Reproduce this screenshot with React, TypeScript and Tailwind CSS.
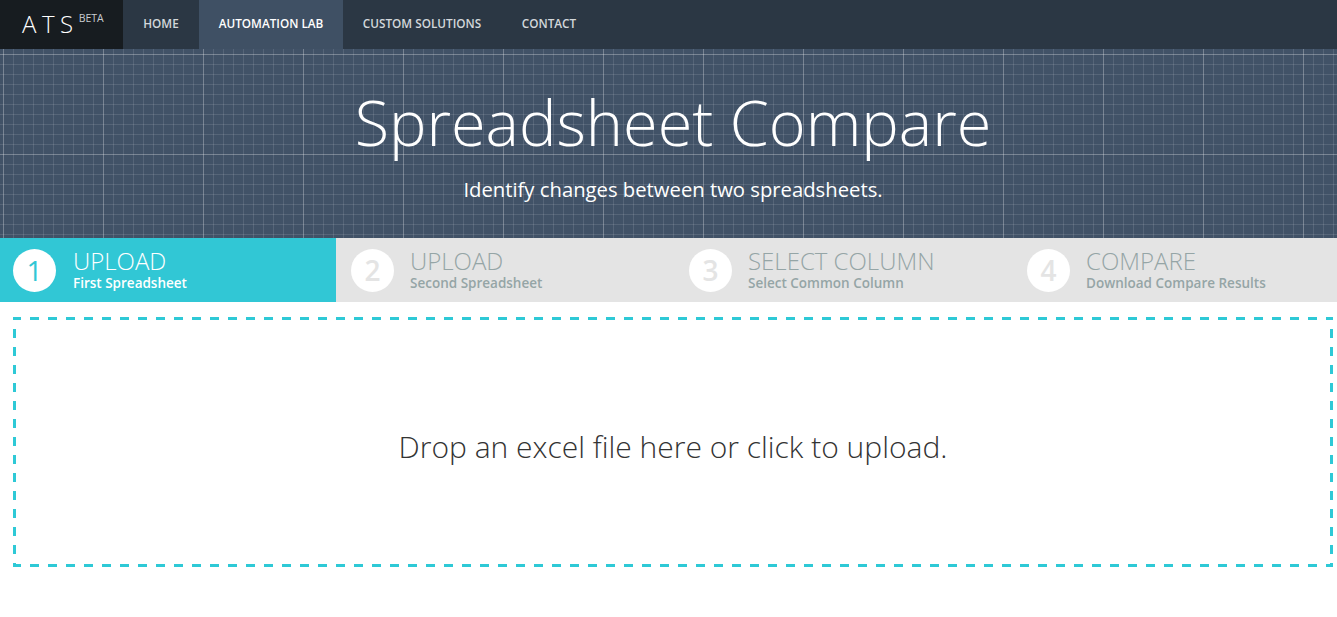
const navItems = [
  { label: "HOME", width: "w-[76px]", active: false },
  { label: "AUTOMATION LAB", width: "w-[144px]", active: true },
  { label: "CUSTOM SOLUTIONS", width: "w-[158px]", active: false },
  { label: "CONTACT", width: "w-[96px]", active: false },
]

const steps = [
  { n: 1, title: "UPLOAD", sub: "First Spreadsheet", active: true },
  { n: 2, title: "UPLOAD", sub: "Second Spreadsheet", active: false },
  { n: 3, title: "SELECT COLUMN", sub: "Select Common Column", active: false },
  { n: 4, title: "COMPARE", sub: "Download Compare Results", active: false },
]

export default function App() {
  return (
    <div className="h-[617px] w-full overflow-hidden bg-white font-['Open_Sans',sans-serif]">
      <nav className="flex h-[49px] bg-[#2b3744]">
        <div className="flex w-[123px] items-start bg-[#171c20] pl-[22px] text-white">
          <span className="mt-[8px] text-[24px] font-light leading-[32px] tracking-[0.23em]">ATS</span>
          <span className="mt-[11px] text-[10.5px] leading-[14px] text-[#c8cdd2]">BETA</span>
        </div>
        {navItems.map((item) => (
          <div
            key={item.label}
            className={
              item.active
                ? "flex items-center justify-center bg-[#3f5064] pb-[2px] text-[11.75px] font-semibold text-white " + item.width
                : "flex items-center justify-center pb-[2px] text-[11.75px] font-semibold text-[#d3d7db] " + item.width
            }
          >
            {item.label}
          </div>
        ))}
      </nav>

      <header className="flex h-[189px] flex-col items-center bg-[#415267] bg-[linear-gradient(rgba(255,255,255,0.2)_1px,transparent_1px),linear-gradient(90deg,rgba(255,255,255,0.2)_1px,transparent_1px),linear-gradient(rgba(255,255,255,0.11)_1px,transparent_1px),linear-gradient(90deg,rgba(255,255,255,0.11)_1px,transparent_1px)] bg-size-[100px_100px,100px_100px,10px_10px,10px_10px] bg-position-[3px_5px,3px_5px,3px_5px,3px_5px] pl-[9px] text-white">
        <h1 className="mt-[29px] text-[63px] font-light leading-[87px]">Spreadsheet Compare</h1>
        <p className="mt-[11px] text-[20.25px] leading-[27px]">Identify changes between two spreadsheets.</p>
      </header>

      <div className="grid h-[64px] grid-cols-[336px_338px_338px_325px] bg-[#e4e4e4]">
        {steps.map((step) => (
          <div key={step.n} className={step.active ? "flex items-center bg-[#31c7d5] pl-[13px]" : "flex items-center pl-[15px]"}>
            <div
              className={
                step.active
                  ? "flex h-[43px] w-[43px] items-center justify-center rounded-full bg-white text-[28px] text-[#31c7d5]"
                  : "flex h-[43px] w-[43px] items-center justify-center rounded-full bg-white text-[28px] font-semibold text-[#e4e4e4]"
              }
            >
              {step.n}
            </div>
            <div className={step.active ? "ml-[17px] pb-[2px] text-white" : "ml-[16px] pb-[2px] text-[#95a5a6]"}>
              <div className="text-[24px] font-light leading-[28px]">{step.title}</div>
              <div className="text-[13.5px] font-semibold leading-[16px]">{step.sub}</div>
            </div>
          </div>
        ))}
      </div>

      <div className="mt-[15px] ml-[13px] flex h-[250px] w-[1320px] items-center justify-center bg-[linear-gradient(90deg,#2ec9d6_50%,transparent_50%),linear-gradient(90deg,#2ec9d6_50%,transparent_50%),linear-gradient(#2ec9d6_50%,transparent_50%),linear-gradient(#2ec9d6_50%,transparent_50%)] bg-size-[18px_3px,18px_3px,3px_18px,3px_18px] bg-position-[-1px_0,-1px_100%,0_12px,100%_12px] [background-repeat:repeat-x,repeat-x,repeat-y,repeat-y] pt-[8px] text-[30px] font-light text-[#333]">
        Drop an excel file here or click to upload.
      </div>
    </div>
  )
}
